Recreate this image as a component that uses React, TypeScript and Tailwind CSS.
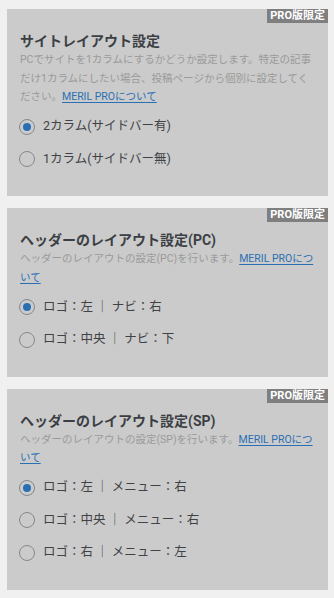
import React from "react";

type Section = {
  title: string;
  desc: React.ReactNode;
  options: string[];
  checked: number;
};

const Link = () => (
  <a className="text-[#2a6fb3] underline underline-offset-2 cursor-pointer">MERIL PROについて</a>
);

const sections: Section[] = [
  {
    title: "サイトレイアウト設定",
    desc: (
      <>
        PCでサイトを1カラムにするかどうか設定します。特定の記事だけ1カラムにしたい場合、投稿ページから個別に設定してください。
        <Link />
      </>
    ),
    options: ["2カラム(サイドバー有)", "1カラム(サイドバー無)"],
    checked: 0,
  },
  {
    title: "ヘッダーのレイアウト設定(PC)",
    desc: (
      <>
        ヘッダーのレイアウトの設定(PC)を行います。
        <Link />
      </>
    ),
    options: ["ロゴ：左 ｜ ナビ：右", "ロゴ：中央 ｜ ナビ：下"],
    checked: 0,
  },
  {
    title: "ヘッダーのレイアウト設定(SP)",
    desc: (
      <>
        ヘッダーのレイアウトの設定(SP)を行います。
        <Link />
      </>
    ),
    options: ["ロゴ：左 ｜ メニュー：右", "ロゴ：中央 ｜ メニュー：右", "ロゴ：右 ｜ メニュー：左"],
    checked: 0,
  },
];

const Radio = ({ on }: { on: boolean }) => (
  <span className="w-[16px] h-[16px] rounded-full border border-[#85888c] flex items-center justify-center shrink-0 ml-[-1px]">
    {on && <span className="w-[8px] h-[8px] rounded-full bg-[#2a6fb3]" />}
  </span>
);

export default function App() {
  return (
    <div
      className="min-h-screen bg-[#f0f0f0] pt-[9px] pb-[6px] flex flex-col gap-[12px]"
      style={{ fontFamily: '"Roboto", "Noto Sans CJK JP", sans-serif' }}
    >
      {sections.map((s, i) => (
        <div key={i} className="relative ml-[7px] mr-[6px] bg-[#cbcbcb] px-[13px] pt-[22px] pb-[27px]">
          <div className="absolute top-0 right-0 h-[14px] px-[3px] bg-[#7f7f7f] text-white text-[11px] leading-[14px] font-bold">
            PRO版限定
          </div>
          <h2 className="text-[14px] leading-[20px] font-bold text-[#3b3f44]">{s.title}</h2>
          <p className="text-[10.5px] leading-[18.5px] text-[#9a9a9a]">{s.desc}</p>
          <div className="mt-[10px] flex flex-col gap-[12.5px]">
            {s.options.map((o, j) => (
              <label key={j} className="h-[20px] flex items-center gap-[8px] text-[12.5px] text-[#3f4246]">
                <Radio on={j === s.checked} />
                <span>{o}</span>
              </label>
            ))}
          </div>
        </div>
      ))}
    </div>
  );
}
